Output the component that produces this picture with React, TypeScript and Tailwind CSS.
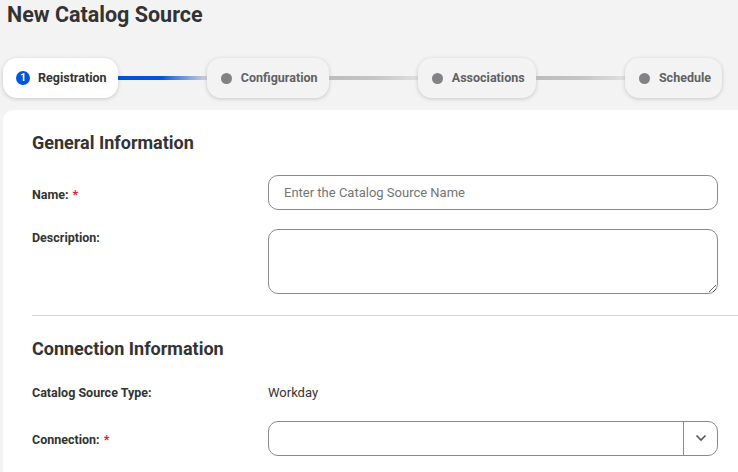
import React from "react";

function Pill({ label, active, num }: { label: string; active?: boolean; num?: string }) {
  return (
    <div
      className={`flex h-[40px] shrink-0 items-center gap-[8px] rounded-[14px] pl-[13px] pr-[11px] shadow-[0_1px_4px_rgba(0,0,0,0.18)] ${
        active ? "bg-white" : "bg-[#f3f3f3]"
      }`}
    >
      {active ? (
        <span className="flex h-[14px] w-[14px] items-center justify-center rounded-full bg-[#0057d8] text-[10px] font-bold leading-none text-white">
          {num}
        </span>
      ) : (
        <span className="ml-[1px] mr-[1px] h-[11px] w-[11px] rounded-full bg-[#808285]" />
      )}
      <span
        className={`text-[12.5px] font-bold ${active ? "text-[#333]" : "text-[#606266]"}`}
      >
        {label}
      </span>
    </div>
  );
}

function Line({ blue }: { blue?: boolean }) {
  return (
    <div
      className={`h-[4px] flex-1 ${
        blue
          ? "bg-gradient-to-r from-[#0050d6] via-[#0057d8] to-[#d0d3d8]"
          : "bg-gradient-to-r from-[#bcbcbc] via-[#c4c4c4] to-[#e0e0e0]"
      }`}
    />
  );
}

function Label({ children, req }: { children: React.ReactNode; req?: boolean }) {
  return (
    <div className="w-[236px] shrink-0 text-[12.5px] font-bold text-[#333]">
      {children}
      {req && <span className="ml-[4px] text-[#e0202a]">*</span>}
    </div>
  );
}

export default function App() {
  return (
    <div
      className="min-h-[472px] w-[738px] overflow-hidden bg-[#f3f3f3]"
      style={{ fontFamily: "Roboto, 'Liberation Sans', sans-serif" }}
    >
      <h1 className="pl-[7px] pt-[1px] text-[21.5px] font-bold leading-[28px] text-[#333]">
        New Catalog Source
      </h1>
      <div className="mt-[29px] flex items-center pl-[3px] pr-[16px]">
        <Pill label="Registration" active num="1" />
        <Line blue />
        <Pill label="Configuration" />
        <Line />
        <Pill label="Associations" />
        <Line />
        <Pill label="Schedule" />
      </div>
      <div className="ml-[3px] mt-[12px] rounded-tl-[10px] bg-white pb-[20px] pl-[29px] pr-[20px] pt-[21px]">
        <h2 className="text-[18px] font-bold leading-[24px] text-[#333]">General Information</h2>
        <div className="mt-[20px] flex items-center">
          <div className="pt-[5px]">
            <Label req>Name:</Label>
          </div>
          <input
            className="h-[35px] flex-1 rounded-[10px] border border-[#8a8a8a] px-[15px] text-[13px] text-[#333] outline-none placeholder:text-[#757575]"
            placeholder="Enter the Catalog Source Name"
          />
        </div>
        <div className="mt-[19px] flex items-start">
          <div className="pt-[0px]">
            <Label>Description:</Label>
          </div>
          <textarea className="block h-[65px] flex-1 rounded-[10px] border border-[#8a8a8a] px-[15px] outline-none" />
        </div>
        <div className="-mr-[20px] mt-[21px] h-px bg-[#d4d4d4]" />
        <h2 className="mt-[21px] text-[18px] font-bold leading-[24px] text-[#333]">
          Connection Information
        </h2>
        <div className="mt-[23px] flex items-center">
          <Label>Catalog Source Type:</Label>
          <span className="-mt-[1px] text-[13px] text-[#333]">Workday</span>
        </div>
        <div className="mt-[18px] flex items-center">
          <div className="pt-[5px]">
            <Label req>Connection:</Label>
          </div>
          <div className="flex h-[35px] flex-1 items-stretch rounded-[10px] border border-[#8a8a8a]">
            <div className="flex-1" />
            <div className="flex w-[34px] items-center justify-center border-l border-[#8a8a8a]">
              <svg width="12" height="8" viewBox="0 0 12 8" fill="none">
                <path d="M1.5 1.5 L6 6 L10.5 1.5" stroke="#555" strokeWidth="1.6" />
              </svg>
            </div>
          </div>
        </div>
      </div>
    </div>
  );
}
